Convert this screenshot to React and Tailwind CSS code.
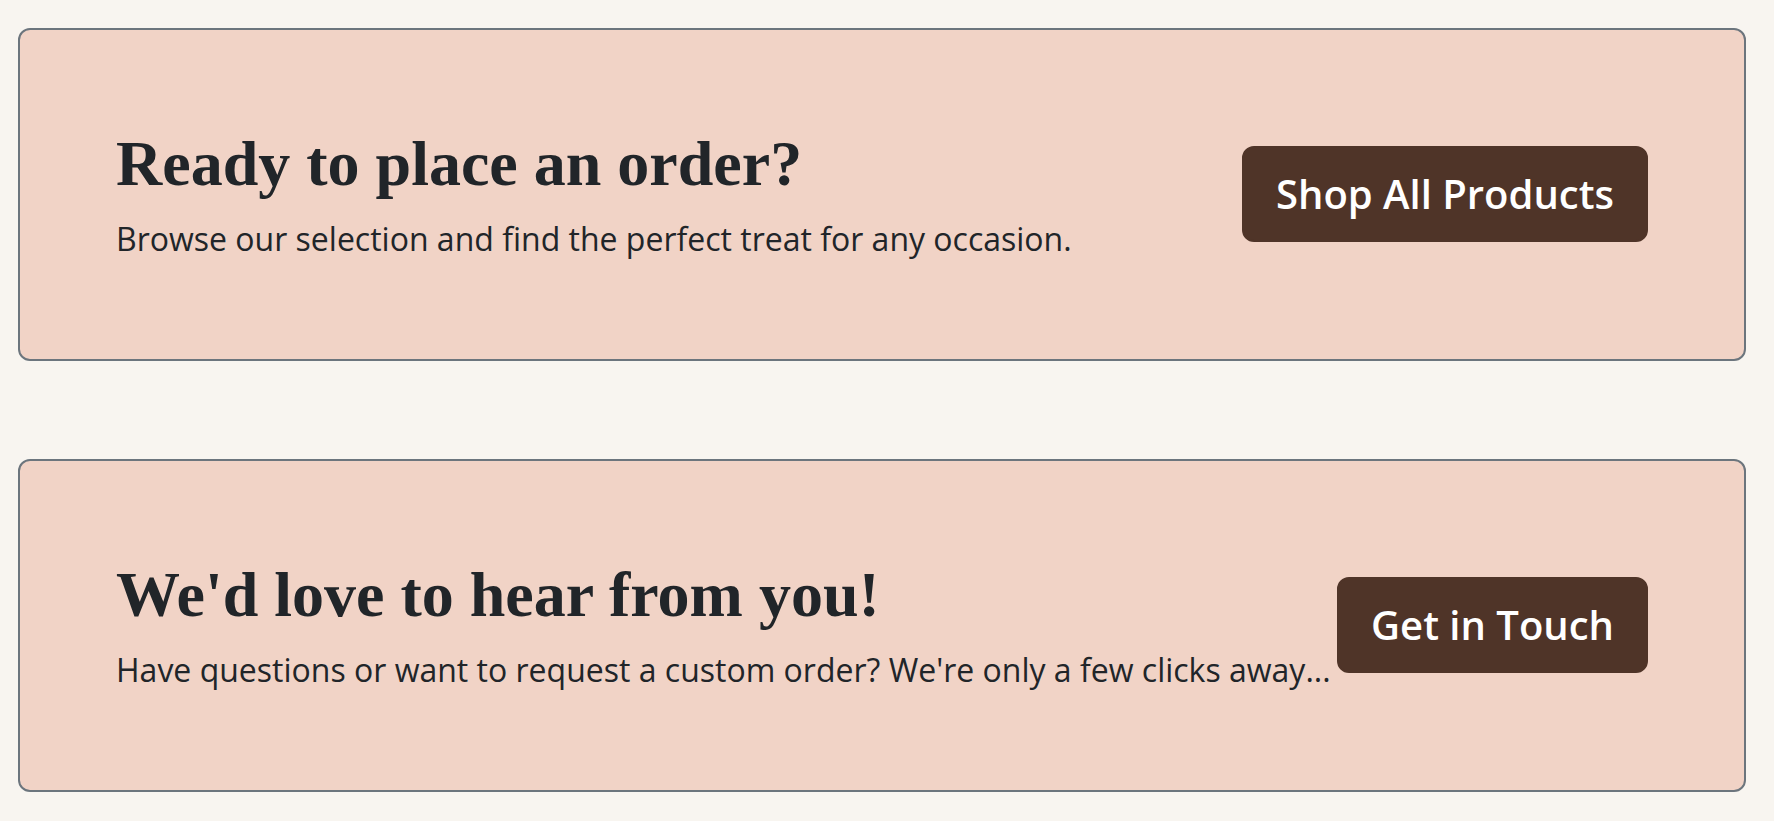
import React from "react";

const cards = [
  {
    title: "Ready to place an order?",
    text: "Browse our selection and find the perfect treat for any occasion.",
    cta: "Shop All Products",
  },
  {
    title: "We'd love to hear from you!",
    text: "Have questions or want to request a custom order? We're only a few clicks away...",
    cta: "Get in Touch",
  },
];

function CtaCard({ title, text, cta }) {
  return (
    <div className="flex items-center justify-between rounded-[12px] border-2 border-[#6c757d] bg-[#f1d3c6] p-[96px]">
      <div className="min-w-0">
        <h2 className="mb-[12px] font-['Liberation_Serif',serif] text-[64px] font-bold leading-[1.2] text-[#212529]">
          {title}
        </h2>
        <p className="whitespace-nowrap font-['Open_Sans',sans-serif] text-[32px] leading-[1.5] text-[#212529]">
          {text}
        </p>
      </div>
      <a
        href="#"
        className="ml-[6px] shrink-0 rounded-[12px] border-2 border-[#4f3428] bg-[#4f3428] px-[32px] py-[16px] font-['Open_Sans',sans-serif] text-[40px] font-semibold leading-[1.5] text-white"
      >
        {cta}
      </a>
    </div>
  );
}

export default function App() {
  return (
    <div className="min-h-screen bg-[#f8f5f0] pl-[18px] pr-[28px] pt-[28px] pb-[30px]">
      <div className="flex flex-col gap-[98px]">
        {cards.map((c) => (
          <CtaCard key={c.cta} {...c} />
        ))}
      </div>
    </div>
  );
}
